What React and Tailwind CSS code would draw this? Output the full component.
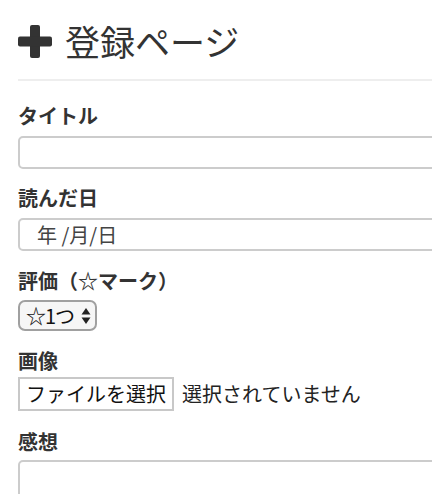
import React from "react";

const font = { fontFamily: '"Noto Sans CJK JP", "Noto Sans", sans-serif' };

function Label({ children, className = "" }) {
  return (
    <div className={"h-[28px] leading-[28px] text-[20px] font-bold text-[#333] " + className}>
      {children}
    </div>
  );
}

export default function App() {
  return (
    <div className="w-[432px] h-[494px] overflow-hidden bg-white text-[#333]" style={font}>
      <div className="w-[560px] pl-[18px]">
        <div className="flex items-center h-[44px] mt-[19px] gap-[13px]">
          <svg width="34" height="33" viewBox="0 0 34 33" className="shrink-0">
            <rect x="12" y="0" width="10" height="33" rx="2" fill="#333" />
            <rect x="0" y="11.5" width="34" height="10" rx="2" fill="#333" />
          </svg>
          <span className="text-[35px] leading-[44px] font-normal">登録ページ</span>
        </div>
        <div className="h-[2px] bg-[#eeeeee] mt-[16px] mb-[21px]" />

        <Label>タイトル</Label>
        <div className="mt-[6px] h-[33px] border-2 border-[#cccccc] rounded-[5px] bg-white" />

        <Label className="mt-[15px]">読んだ日</Label>
        <div className="mt-[6px] h-[33px] border-2 border-[#cccccc] rounded-[5px] bg-white flex items-center pl-[17px] text-[20px] text-[#444]">
          年 /月/日
        </div>

        <Label className="mt-[16px]">評価（☆マーク）</Label>
        <div className="mt-[5px] w-[79px] h-[31px] border-2 border-[#a0a0a0] rounded-[7px] bg-[#f6f6f6] flex items-center pl-[6px] pr-[4px] justify-between">
          <span className="text-[20px] leading-[27px] text-[#111] tracking-[-1px]">☆1つ</span>
          <svg width="10" height="18" viewBox="0 0 10 18">
            <path d="M5 1 L9.5 7.5 L0.5 7.5 Z" fill="#222" />
            <path d="M5 17 L9.5 10.5 L0.5 10.5 Z" fill="#222" />
          </svg>
        </div>

        <Label className="mt-[16px]">画像</Label>
        <div className="mt-[2px] flex items-center gap-[8px]">
          <div className="w-[156px] h-[34px] border-2 border-[#c8c8c8] bg-white flex items-center justify-center text-[20px] text-[#111]">
            ファイルを選択
          </div>
          <span className="text-[20px] text-[#222]">選択されていません</span>
        </div>

        <Label className="mt-[17px]">感想</Label>
        <div className="mt-[4px] h-[80px] border-2 border-[#cccccc] rounded-[5px] bg-white" />
      </div>
    </div>
  );
}
